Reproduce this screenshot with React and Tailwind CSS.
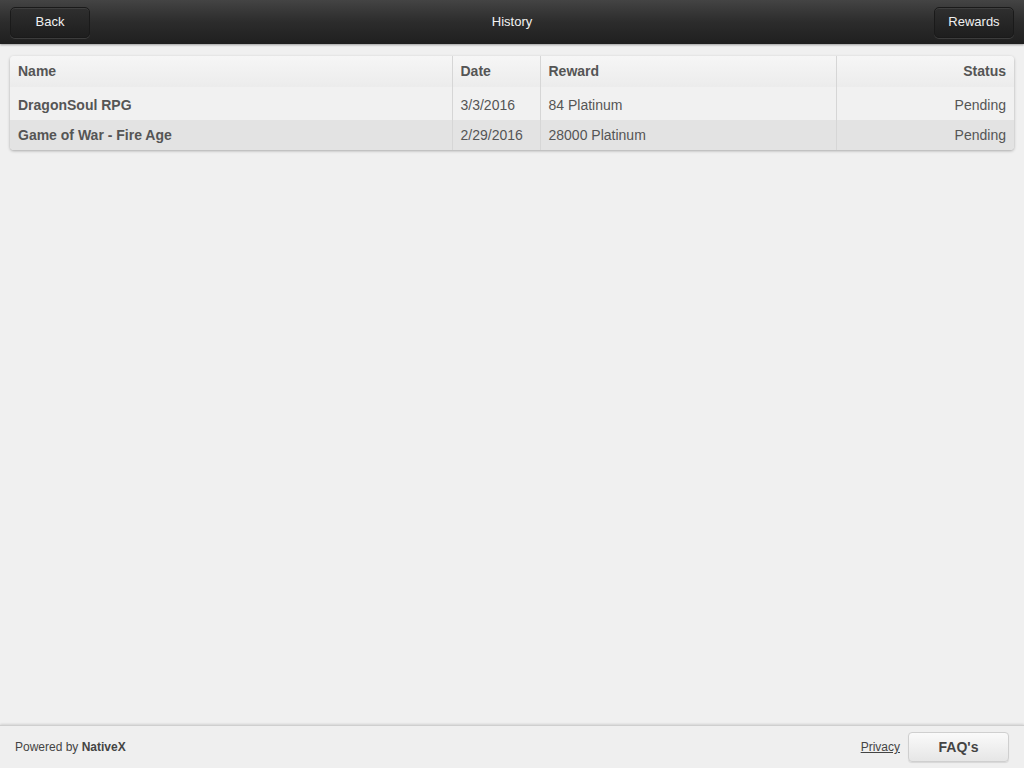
import React from "react";

const rows = [
  { name: "DragonSoul RPG", date: "3/3/2016", reward: "84 Platinum", status: "Pending" },
  { name: "Game of War - Fire Age", date: "2/29/2016", reward: "28000 Platinum", status: "Pending" },
];

function NavButton({ children }) {
  return (
    <button className="h-[31px] w-[80px] rounded-[5px] border border-[#1a1a1a] bg-gradient-to-b from-[#2f2f2f] to-[#1e1e1e] text-[13px] text-[#f0f0f0] shadow-[inset_0_1px_0_rgba(255,255,255,0.08),0_1px_0_rgba(255,255,255,0.12)]">
      {children}
    </button>
  );
}

export default function App() {
  return (
    <div className="flex h-[768px] w-[1024px] flex-col bg-[#f0f0f0] font-['Liberation_Sans',Arial,sans-serif] text-[#555]">
      {/* Top bar */}
      <header className="flex h-[44px] shrink-0 items-center justify-between bg-gradient-to-b from-[#444] via-[#2c2c2c] to-[#1f1f1f] px-[10px] shadow-[0_1px_2px_rgba(0,0,0,0.35)]">
        <NavButton>Back</NavButton>
        <h1 className="text-[13px] text-[#f2f2f2]">History</h1>
        <NavButton>Rewards</NavButton>
      </header>

      {/* History table */}
      <main className="flex-1 px-[10px] pt-[12px]">
        <div className="overflow-hidden rounded-[4px] bg-[#f0f0f0] shadow-[0_1px_3px_rgba(0,0,0,0.3)]">
          <table className="w-full border-collapse text-[14px]">
            <thead>
              <tr className="h-[31px] bg-gradient-to-b from-[#f6f6f6] to-[#ececec] font-bold shadow-[0_1px_2px_rgba(0,0,0,0.2)]">
                <th className="w-[442px] border-r border-[#d6d6d6] pl-[8px] text-left">Name</th>
                <th className="w-[88px] border-r border-[#d6d6d6] pl-[8px] text-left">Date</th>
                <th className="w-[296px] border-r border-[#d6d6d6] pl-[8px] text-left">Reward</th>
                <th className="pr-[8px] text-right">Status</th>
              </tr>
            </thead>
            <tbody>
              {rows.map((r, i) => (
                <tr key={r.name} className={i % 2 ? "h-[30px] bg-[#e3e3e3]" : "h-[33px] bg-[#f1f1f1]"}>
                  <td className={i % 2 ? "border-r border-[#d6d6d6] pl-[8px] font-bold" : "border-r border-[#d6d6d6] pl-[8px] pt-[3px] font-bold"}>{r.name}</td>
                  <td className={i % 2 ? "border-r border-[#d6d6d6] pl-[8px]" : "border-r border-[#d6d6d6] pl-[8px] pt-[3px]"}>{r.date}</td>
                  <td className={i % 2 ? "border-r border-[#d6d6d6] pl-[8px]" : "border-r border-[#d6d6d6] pl-[8px] pt-[3px]"}>{r.reward}</td>
                  <td className={i % 2 ? "pr-[8px] text-right" : "pr-[8px] pt-[3px] text-right"}>{r.status}</td>
                </tr>
              ))}
            </tbody>
          </table>
        </div>
      </main>

      {/* Footer */}
      <footer className="flex h-[43px] shrink-0 items-center justify-between border-t border-[#cfcfcf] bg-[#efefef] pl-[15px] pr-[15px] shadow-[0_-1px_2px_rgba(0,0,0,0.12)]">
        <p className="text-[12px] text-[#444]">
          Powered by <span className="font-bold">NativeX</span>
        </p>
        <div className="flex items-center gap-[8px]">
          <a className="text-[12px] text-[#444] underline">Privacy</a>
          <button className="h-[30px] w-[101px] rounded-[4px] border border-[#cfcfcf] bg-gradient-to-b from-[#fafafa] to-[#e6e6e6] text-[14px] font-bold text-[#444] shadow-[0_1px_1px_rgba(0,0,0,0.1)]">
            FAQ's
          </button>
        </div>
      </footer>
    </div>
  );
}
